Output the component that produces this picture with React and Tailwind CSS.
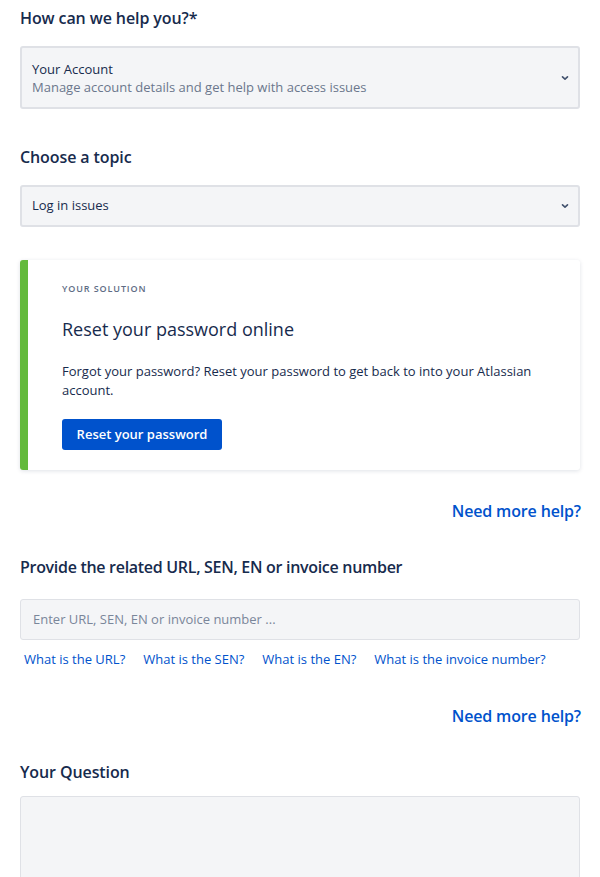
import React from 'react';

const Chevron = () => (
    <svg width="10" height="10" viewBox="0 0 10 10" className="text-[#42526e]">
        <path d="M2.5 3.8 L5 6.2 L7.5 3.8" fill="none" stroke="currentColor" strokeWidth="1.6" strokeLinecap="round" strokeLinejoin="round" />
    </svg>
);

const NeedHelp = () => (
    <div className="flex justify-end -mr-px">
        <a href="#" className="text-[16px] font-semibold text-[#0052cc] leading-5 tracking-[-0.15px]">Need more help?</a>
    </div>
);

const App = () => {
    return (
        <div className="w-[600px] bg-white px-5 pt-[8px] text-[#172b4d] font-['Open_Sans',sans-serif]">
            <h2 className="text-[16px] font-semibold leading-5 tracking-[-0.1px]">How can we help you?*</h2>
            <div className="mt-[18px] flex items-center justify-between h-[63px] bg-[#f4f5f7] border-2 border-[#dfe1e6] rounded-[3px] pl-[10px] pr-[8px]">
                <div className="flex flex-col text-[13px] leading-[18px]">
                    <span className="text-[#172b4d]">Your Account</span>
                    <span className="text-[#6b778c]">Manage account details and get help with access issues</span>
                </div>
                <Chevron />
            </div>

            <h2 className="mt-[38px] text-[16px] font-semibold leading-5 tracking-[-0.1px]">Choose a topic</h2>
            <div className="mt-[18px] flex items-center justify-between h-[42px] bg-[#f4f5f7] border-2 border-[#dfe1e6] rounded-[3px] pl-[10px] pr-[8px]">
                <span className="text-[13px] text-[#172b4d]">Log in issues</span>
                <Chevron />
            </div>

            <div className="mt-[33px] flex rounded-[3px] bg-white shadow-[0_1px_4px_rgba(9,30,66,0.13)] overflow-hidden h-[210px]">
                <div className="w-2 bg-[#63ba3c] shrink-0" />
                <div className="pl-[34px] pr-8 pt-[23px]">
                    <div className="text-[9px] font-semibold tracking-[0.9px] uppercase text-[#5e6c84] leading-[12px]">Your solution</div>
                    <h3 className="mt-[22px] text-[18px] font-medium leading-6 text-[#172b4d]">Reset your password online</h3>
                    <p className="mt-[21px] text-[13px] leading-[19px] text-[#172b4d]">
                        Forgot your password? Reset your password to get back to into your Atlassian account.
                    </p>
                    <button className="mt-[19px] h-[31px] w-[160px] rounded-[3px] bg-[#0052cc] text-white text-[13px] font-semibold">Reset your password</button>
                </div>
            </div>

            <div className="mt-[31px]"><NeedHelp /></div>

            <h2 className="mt-[36px] text-[16px] font-semibold leading-5 tracking-[-0.3px]">Provide the related URL, SEN, EN or invoice number</h2>
            <div className="mt-[22px] flex items-center h-[41px] bg-[#f4f5f7] border border-[#dfe1e6] rounded-[3px] px-3">
                <span className="text-[13px] text-[#7a869a]">Enter URL, SEN, EN or invoice number ...</span>
            </div>
            <div className="mt-[10px] flex gap-[18px] pl-1 text-[13px] text-[#0052cc] leading-[18px]">
                <a href="#">What is the URL?</a>
                <a href="#">What is the SEN?</a>
                <a href="#">What is the EN?</a>
                <a href="#">What is the invoice number?</a>
            </div>

            <div className="mt-[38px]"><NeedHelp /></div>

            <h2 className="mt-[36px] text-[16px] font-semibold leading-5 tracking-[-0.1px]">Your Question</h2>
            <div className="mt-[14px] h-[120px] bg-[#f4f5f7] border border-[#dfe1e6] rounded-[3px]" />
        </div>
    );
};

export default App;
